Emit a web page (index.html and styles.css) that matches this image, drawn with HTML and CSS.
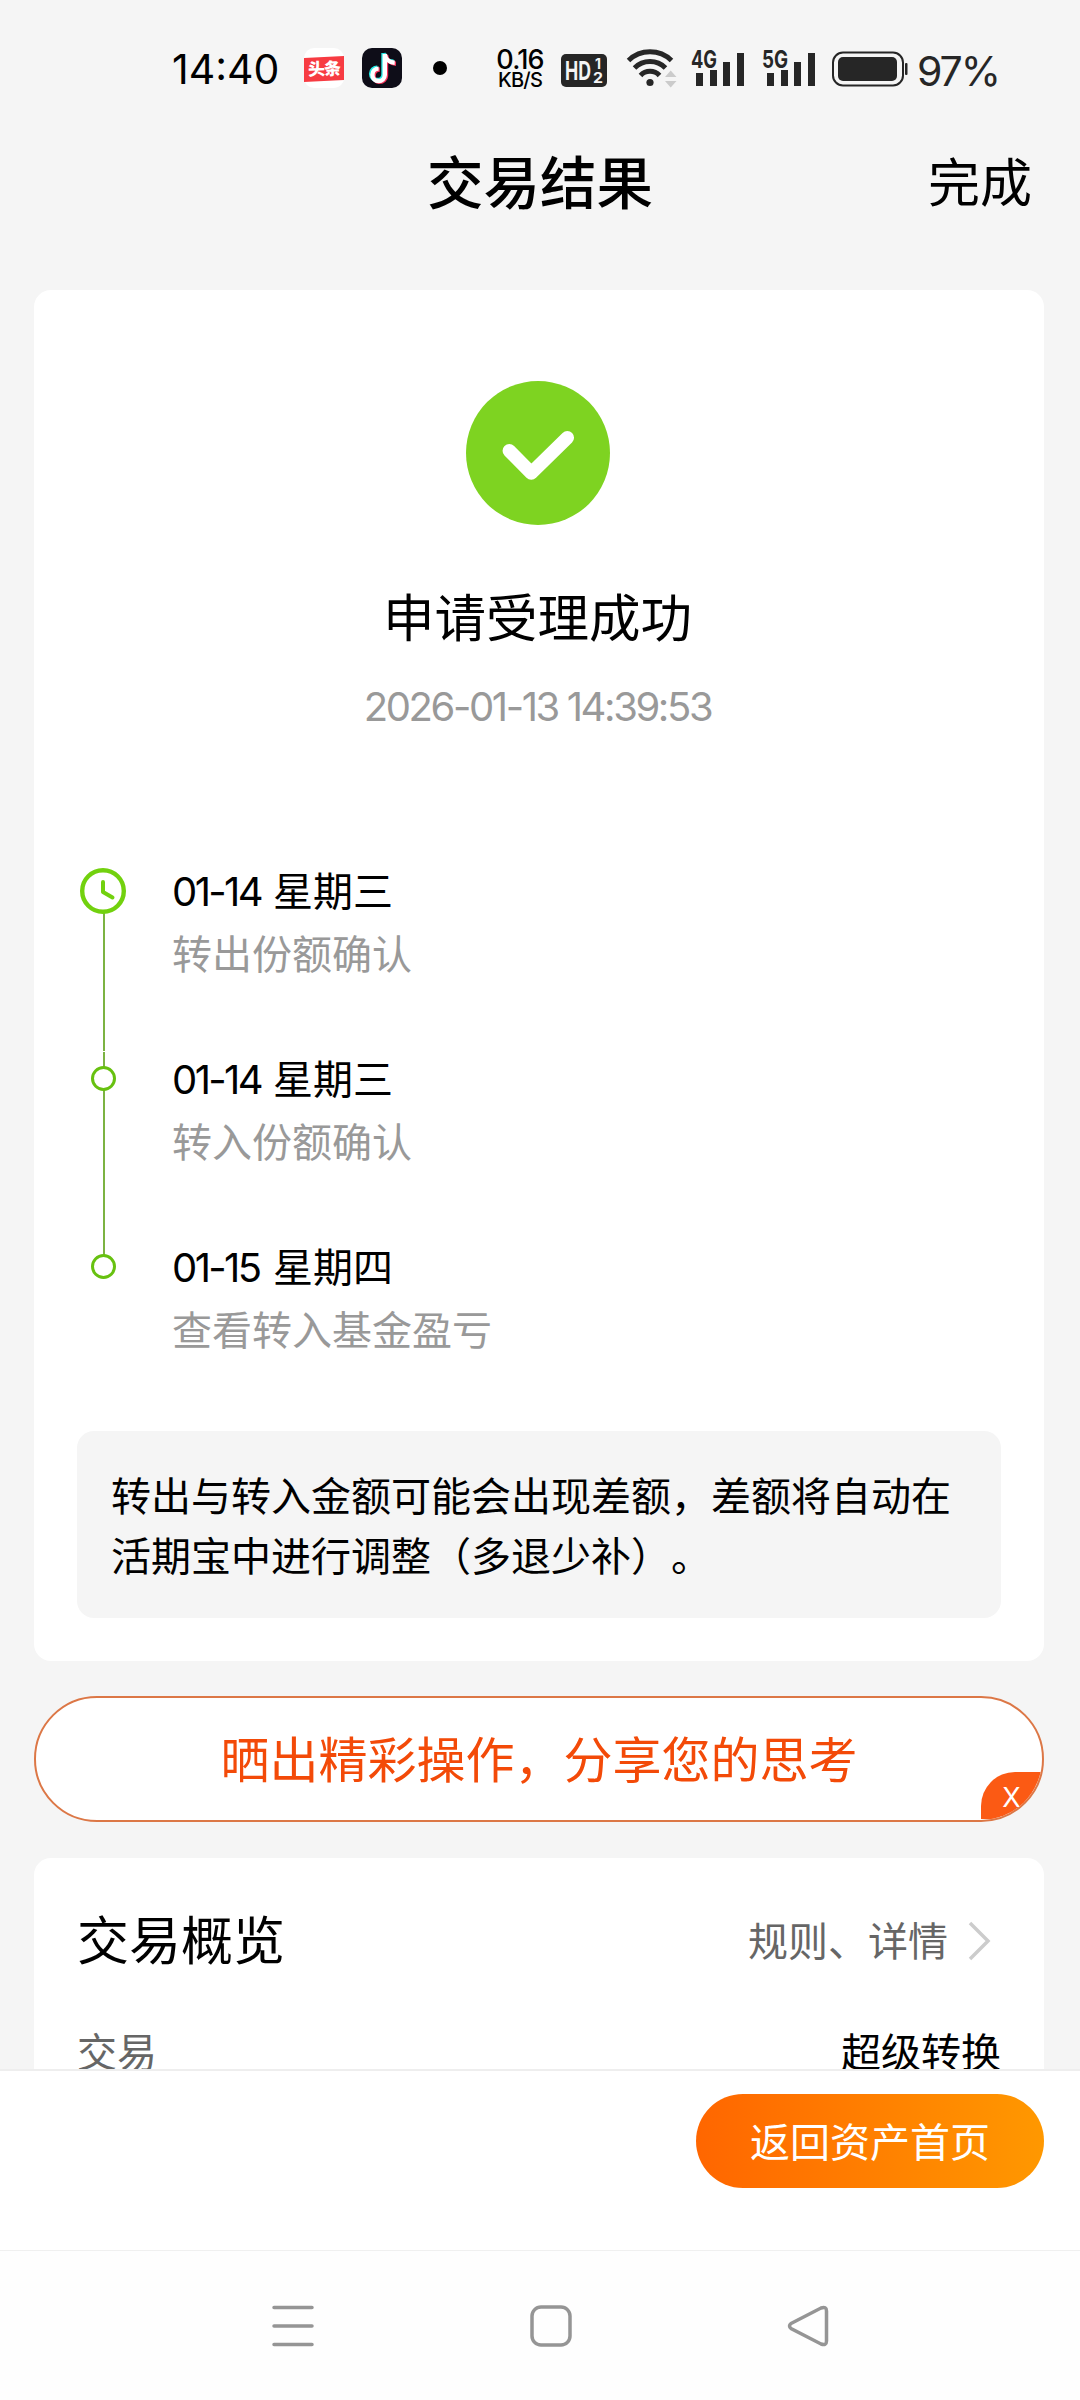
FILE: index.html
```html
<!DOCTYPE html>
<html lang="zh-CN">
<head>
    <meta charset="UTF-8">
    <title>交易结果</title>
    <link rel="stylesheet" href="styles.css">
</head>
<body>
    <div class="status-bar">
        <span class="time">14:40</span>
        <svg class="app-toutiao" width="40" height="40" viewBox="0 0 40 40">
            <rect width="40" height="40" rx="10" fill="#fff"/>
            <path d="M0,10 L40,8 L40,32 L0,34 Z" fill="#f73b42"/>
            <text x="4" y="27" font-size="17" font-weight="900" textLength="33" fill="#fff" transform="rotate(-2 20 20)">头条</text>
        </svg>
        <svg class="app-douyin" width="40" height="40" viewBox="0 0 40 40">
            <rect width="40" height="40" rx="10" fill="#0e0d18"/>
            <g fill="none" stroke-width="4.4">
                <path d="M21.5,5 V26 A6.2,6.2 0 1 1 15.3,19.6 M21.5,5 C22,10 26,13.5 31.5,13.8" stroke="#25e6e2"/>
                <path d="M24,7 V28 A6.2,6.2 0 1 1 17.8,21.5 M24,7 C24.5,12 28.5,15.5 34,15.7" stroke="#f8345c"/>
                <path d="M22.8,6 V27 A6.2,6.2 0 1 1 16.6,20.6 M22.8,6 C23.3,11 27.3,14.5 32.7,14.8" stroke="#fff"/>
            </g>
        </svg>
        <span class="dot"></span>
        <div class="speed">
            <span class="speed-num">0.16</span>
            <span class="speed-unit">KB/S</span>
        </div>
        <svg class="hd" width="46" height="33" viewBox="0 0 46 33">
            <rect width="46" height="33" rx="5" fill="#262626"/>
            <g fill="#f4f4f4" font-weight="700">
                <text x="4" y="26" font-size="26" textLength="26" lengthAdjust="spacingAndGlyphs">HD</text>
                <text x="34" y="15" font-size="14" textLength="6" lengthAdjust="spacingAndGlyphs">1</text>
                <text x="32" y="29" font-size="14" textLength="10" lengthAdjust="spacingAndGlyphs">2</text>
            </g>
        </svg>
        <svg class="wifi" width="54" height="40" viewBox="0 0 54 40">
            <g fill="none" stroke="#262626" stroke-width="5">
                <path d="M3.5,12.5 A31,31 0 0 1 46.5,12.5"/>
                <path d="M9.5,20 A22,22 0 0 1 40.5,20"/>
                <path d="M15.5,27.5 A13,13 0 0 1 34.5,27.5"/>
            </g>
            <circle cx="25" cy="34.5" r="3.6" fill="#262626"/>
            <path d="M40,29 L45.7,22.5 L51.5,29 Z M40,33 L51.5,33 L45.7,39.5 Z" fill="#cbcbcb"/>
        </svg>
        <svg class="signal" width="54" height="38" viewBox="0 0 54 38">
            <text x="0" y="18.5" font-size="24" font-weight="700" textLength="26" lengthAdjust="spacingAndGlyphs">4G</text>
            <path d="M5,24h7v13h-7z M19,21h7v16h-7z M32,13h7v24h-7z M46,4h7v33h-7z"/>
        </svg>
        <svg class="signal signal-2" width="54" height="38" viewBox="0 0 54 38">
            <text x="0" y="18.5" font-size="24" font-weight="700" textLength="26" lengthAdjust="spacingAndGlyphs">5G</text>
            <path d="M5,24h7v13h-7z M19,21h7v16h-7z M32,13h7v24h-7z M46,4h7v33h-7z"/>
        </svg>
        <svg class="battery" width="78" height="36" viewBox="0 0 78 36">
            <rect x="2" y="1.5" width="70" height="33" rx="10" fill="none" stroke="#262626" stroke-width="2"/>
            <rect x="7" y="6" width="59" height="24" rx="5" fill="#262626"/>
            <rect x="74" y="12" width="2.5" height="12" rx="1" fill="#262626"/>
        </svg>
        <span class="percent">97%</span>
    </div>

    <div class="header">
        <span></span>
        <h1>交易结果</h1>
        <a class="done">完成</a>
    </div>

    <div class="content">
        <div class="card result">
            <svg class="success" width="144" height="144" viewBox="0 0 144 144">
                <circle cx="72" cy="72" r="72" fill="#7ed321"/>
                <path d="M43.3,69.7 L65.3,92 L101.3,56.7" fill="none" stroke="#fff" stroke-width="13.5" stroke-linecap="round" stroke-linejoin="round"/>
            </svg>
            <h2>申请受理成功</h2>
            <div class="date">2026-01-13 14:39:53</div>

            <ul class="timeline">
                <li>
                    <svg class="rail" width="52" height="188" viewBox="0 0 52 188">
                        <path d="M27,53 V188" stroke="#7cb342" stroke-width="2"/>
                        <circle cx="26" cy="31" r="20.8" fill="#fff" stroke="#72d10e" stroke-width="4.4"/>
                        <path d="M26,22 V32 L35.5,37.5" fill="none" stroke="#72d10e" stroke-width="4" stroke-linecap="round" stroke-linejoin="round"/>
                    </svg>
                    <div>
                        <div class="day"><span>01-14</span>星期三</div>
                        <div class="step">转出份额确认</div>
                    </div>
                </li>
                <li>
                    <svg class="rail" width="52" height="188" viewBox="0 0 52 188">
                        <path d="M27,0 V3 M27,4 V188" stroke="#7cb342" stroke-width="2"/>
                        <circle cx="26.5" cy="30.5" r="11" fill="#fff" stroke="#67c110" stroke-width="3"/>
                    </svg>
                    <div>
                        <div class="day"><span>01-14</span>星期三</div>
                        <div class="step">转入份额确认</div>
                    </div>
                </li>
                <li>
                    <svg class="rail" width="52" height="126" viewBox="0 0 52 126">
                        <path d="M27,0 V20" stroke="#7cb342" stroke-width="2"/>
                        <circle cx="26.5" cy="30.5" r="11" fill="#fff" stroke="#67c110" stroke-width="3"/>
                    </svg>
                    <div>
                        <div class="day"><span>01-15</span>星期四</div>
                        <div class="step">查看转入基金盈亏</div>
                    </div>
                </li>
            </ul>

            <div class="tip">转出与转入金额可能会出现差额，差额将自动在<br>活期宝中进行调整（多退少补）。</div>
        </div>

        <div class="share">
            晒出精彩操作，分享您的思考
            <span class="close">X</span>
        </div>

        <div class="card overview">
            <div class="row">
                <h3>交易概览</h3>
                <a class="more">规则、详情
                    <svg width="26" height="40" viewBox="0 0 26 40">
                        <path d="M4,1 L22,19 L4,37" fill="none" stroke="#ccc" stroke-width="3.5"/>
                    </svg>
                </a>
            </div>
            <div class="row item">
                <span class="label">交易</span>
                <span>超级转换</span>
            </div>
        </div>
    </div>

    <div class="footer">
        <button class="home-btn">返回资产首页</button>
    </div>

    <div class="nav">
        <svg width="42" height="42" viewBox="0 0 42 42">
            <path d="M2,2.5 H40 M2,21 H40 M2,39.5 H40"/>
        </svg>
        <svg width="42" height="42" viewBox="0 0 42 42">
            <rect x="2" y="2" width="38" height="38" rx="9"/>
        </svg>
        <svg width="42" height="42" viewBox="0 0 42 42">
            <path d="M3,18.5 L33,3 Q38.5,1 38.5,6 V36 Q38.5,41 33,39 L3,23.5 Q0,21 3,18.5 Z"/>
        </svg>
    </div>
</body>
</html>
```

FILE: styles.css
```css
* {
    box-sizing: border-box;
    margin: 0;
    padding: 0;
}

body {
    width: 1080px;
    height: 2400px;
    display: flex;
    flex-direction: column;
    background: #f5f5f5;
    font-family: Inter, 'Noto Sans CJK SC', sans-serif;
    font-size: 40px;
    color: #000;
    text-spacing-trim: space-all;
    overflow: hidden;
}

svg {
    display: block;
    flex: none;
    overflow: visible;
}

/* status bar */
.status-bar {
    height: 102px;
    padding: 34px 0 0 172px;
    display: flex;
    align-items: center;
    flex: none;
    white-space: nowrap;
}

.time {
    width: 132px;
    padding-top: 2px;
    font-size: 41px;
}

.app-douyin {
    margin-left: 18px;
}

.dot {
    width: 14px;
    height: 14px;
    margin-left: 31px;
    border-radius: 50%;
    background: #000;
}

.speed {
    width: 54px;
    margin-left: 46px;
    padding-top: 2px;
    display: flex;
    flex-direction: column;
    align-items: center;
    font-weight: 500;
}

.speed-num {
    font-size: 27px;
    line-height: 23px;
    letter-spacing: -0.8px;
}

.speed-unit {
    font-size: 20px;
    line-height: 19px;
    letter-spacing: -0.8px;
}

.hd {
    margin: 5px 0 0 14px;
}

.wifi {
    margin-left: 18px;
}

.signal {
    margin-left: 12px;
    fill: #262626;
}

.signal-2 {
    margin-left: 17px;
}

.battery {
    margin: 2px 0 0 15px;
}

.percent {
    margin: 5px 0 0 8px;
    font-size: 41px;
    letter-spacing: -2px;
    color: #262626;
}

/* title bar */
.header {
    height: 164px;
    padding: 0 48px 10px;
    display: grid;
    grid-template-columns: 1fr auto 1fr;
    align-items: center;
    flex: none;
}

h1 {
    font-size: 56.5px;
    font-weight: 500;
}

.done {
    font-size: 52px;
    text-align: right;
}

.content {
    flex: 1;
    min-height: 0;
    padding: 24px 36px 0 34px;
    overflow: hidden;
}

.card {
    background: #fff;
    border-radius: 17px;
}

.result {
    height: 1371px;
    padding: 91px 43px 43px;
}

.success {
    margin: 0 auto 57px;
    position: relative;
    left: -1px;
}

h2 {
    padding-right: 3px;
    font-size: 51.5px;
    font-weight: 400;
    line-height: 73px;
    text-align: center;
}

.date {
    margin-top: 22px;
    padding-right: 3px;
    line-height: 60px;
    letter-spacing: -2.4px;
    text-align: center;
    color: #999;
}

.timeline {
    margin-top: 123px;
    list-style: none;
}

.timeline li {
    display: flex;
    gap: 43px;
    line-height: 63px;
}

.day span {
    display: inline-block;
    width: 101px;
    letter-spacing: -2.6px;
}

.step {
    color: #999;
}

.tip {
    margin-top: 69px;
    height: 187px;
    padding: 36px 34px 32px;
    border-radius: 17px;
    background: #f5f5f5;
    line-height: 59.5px;
    white-space: nowrap;
}

.share {
    position: relative;
    height: 126px;
    margin: 35px 0 36px;
    border: 2px solid #dc7746;
    border-radius: 63px;
    background: #fff;
    font-size: 49px;
    line-height: 125px;
    text-align: center;
    color: #f34a08;
    overflow: hidden;
}

.close {
    position: absolute;
    right: 0;
    bottom: 1px;
    width: 61px;
    height: 47px;
    border-top-left-radius: 34px;
    background: #fb5a14;
    font-size: 27px;
    line-height: 51px;
    color: #fff;
}

.overview {
    height: 400px;
    padding: 54px 43px;
}

.row {
    display: flex;
    justify-content: space-between;
    align-items: center;
    line-height: 60px;
}

h3 {
    font-size: 52px;
    font-weight: 400;
}

.more {
    display: flex;
    align-items: center;
    gap: 18px;
    margin-right: 9px;
    color: #666;
}

.item {
    margin-top: 51px;
}

.label {
    color: #666;
}

/* bottom bar */
.footer {
    height: 181px;
    flex: none;
    display: flex;
    justify-content: flex-end;
    align-items: flex-start;
    padding: 23px 36px 0 0;
    border-top: 2px solid #eee;
    background: #fff;
}

.home-btn {
    width: 348px;
    height: 94px;
    padding-bottom: 3px;
    border: none;
    border-radius: 47px;
    background: linear-gradient(to right, #ff6600, #ff9800);
    font-family: inherit;
    font-size: 40px;
    color: #fff;
}

.nav {
    height: 150px;
    flex: none;
    display: flex;
    justify-content: center;
    align-items: center;
    gap: 216px;
    padding-left: 21px;
    border-top: 1px solid #f0f0f0;
    background: #fefefe;
}

.nav svg {
    fill: none;
    stroke: #959595;
    stroke-width: 3.5;
    stroke-linecap: round;
}
```
